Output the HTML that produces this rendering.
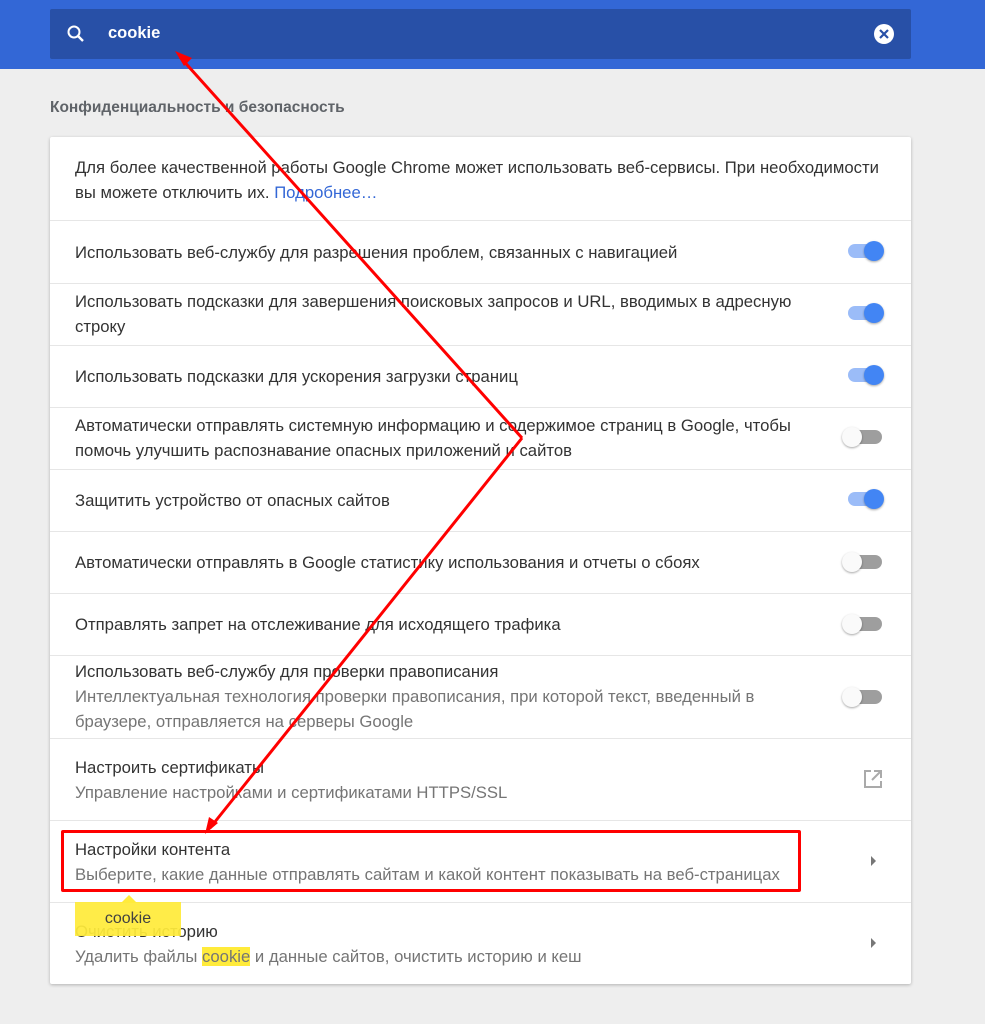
<!DOCTYPE html>
<html><head><meta charset="utf-8"><style>
body{margin:0;width:985px;height:1024px;background:#eeeeee;font-family:"Liberation Sans",Arial,sans-serif;position:relative;overflow:hidden}
.top{position:absolute;left:0;top:0;width:985px;height:69px;background:#3367d6}
.search{position:absolute;left:50px;top:9px;width:861px;height:50px;background:#2850a7;border-radius:2px}
.h{position:absolute;left:50px;top:99px;font-size:15.5px;font-weight:bold;color:#5f6368}
.card{position:absolute;left:50px;top:137px;width:861px;height:847px;background:#fff;box-shadow:0 1px 3px rgba(0,0,0,.25);border-radius:2px}
.t{position:absolute;left:75px;font-size:16.7px;color:#333;line-height:25px;white-space:nowrap}
.s{color:#757575}
.d{position:absolute;left:50px;width:861px;height:1px;background:#e6e6e6}
.tg{position:absolute;left:848px;width:34px;height:14px;border-radius:7px}
.tg i{position:absolute;top:-3px;width:20px;height:20px;border-radius:50%;box-shadow:0 1px 2px rgba(0,0,0,.35)}
.on{background:#9bbcf8}.on i{left:16px;background:#4285f4}
.off{background:#9e9e9e}.off i{left:-6px;background:#fafafa}
</style></head><body>
<div class="top"></div>
<div class="search">
<svg style="position:absolute;left:16px;top:15px" width="20" height="20" viewBox="0 0 20 20"><circle cx="8" cy="8" r="5.5" fill="none" stroke="#fff" stroke-width="2"/><path d="M12 12l5 5" stroke="#fff" stroke-width="2.4"/></svg>
<div style="position:absolute;left:58px;top:15px;color:#fff;font-size:16.5px;font-weight:bold">cookie</div>
<svg style="position:absolute;left:823px;top:14px" width="22" height="22" viewBox="0 0 22 22"><circle cx="11" cy="11" r="10" fill="#fff"/><path d="M7 7l8 8M15 7l-8 8" stroke="#2850a7" stroke-width="2.2"/></svg>
</div>
<div class="h">Конфиденциальность и безопасность</div>
<div class="card"></div>
<div class="t" style="top:155px">Для более качественной работы Google Chrome может использовать веб-сервисы. При необходимости<br>вы можете отключить их. <span style="color:#3367d6">Подробнее…</span></div>
<div class="d" style="top:220px"></div>
<div class="t" style="top:240px">Использовать веб-службу для разрешения проблем, связанных с навигацией</div>
<div class="tg on" style="top:244px"><i></i></div>
<div class="d" style="top:283px"></div>
<div class="t" style="top:289px">Использовать подсказки для завершения поисковых запросов и URL, вводимых в адресную<br>строку</div>
<div class="tg on" style="top:306px"><i></i></div>
<div class="d" style="top:345px"></div>
<div class="t" style="top:364px">Использовать подсказки для ускорения загрузки страниц</div>
<div class="tg on" style="top:368px"><i></i></div>
<div class="d" style="top:407px"></div>
<div class="t" style="top:413px">Автоматически отправлять системную информацию и содержимое страниц в Google, чтобы<br>помочь улучшить распознавание опасных приложений и сайтов</div>
<div class="tg off" style="top:430px"><i></i></div>
<div class="d" style="top:469px"></div>
<div class="t" style="top:488px">Защитить устройство от опасных сайтов</div>
<div class="tg on" style="top:492px"><i></i></div>
<div class="d" style="top:531px"></div>
<div class="t" style="top:550px">Автоматически отправлять в Google статистику использования и отчеты о сбоях</div>
<div class="tg off" style="top:555px"><i></i></div>
<div class="d" style="top:593px"></div>
<div class="t" style="top:612px">Отправлять запрет на отслеживание для исходящего трафика</div>
<div class="tg off" style="top:617px"><i></i></div>
<div class="d" style="top:655px"></div>
<div class="t" style="top:659px">Использовать веб-службу для проверки правописания<br><span class="s">Интеллектуальная технология проверки правописания, при которой текст, введенный в<br>браузере, отправляется на серверы Google</span></div>
<div class="tg off" style="top:690px"><i></i></div>
<div class="d" style="top:738px"></div>
<div class="t" style="top:755px">Настроить сертификаты<br><span class="s">Управление настройками и сертификатами HTTPS/SSL</span></div>
<svg style="position:absolute;left:863px;top:769px" width="20" height="20" viewBox="0 0 20 20"><path d="M8 2H2v16h16v-6" fill="none" stroke="#aaa" stroke-width="2"/><path d="M11 2h7v7M18 2l-9 9" fill="none" stroke="#aaa" stroke-width="2"/></svg>
<div class="d" style="top:820px"></div>
<div class="t" style="top:837px">Настройки контента<br><span class="s">Выберите, какие данные отправлять сайтам и какой контент показывать на веб-страницах</span></div>
<div style="position:absolute;left:871px;top:856px;border-left:5px solid #777;border-top:5px solid transparent;border-bottom:5px solid transparent"></div>
<div class="d" style="top:902px"></div>
<div class="t" style="top:919px">Очистить историю<br><span class="s">Удалить файлы <span style="background:#ffeb3b">cookie</span> и данные сайтов, очистить историю и кеш</span></div>
<div style="position:absolute;left:871px;top:938px;border-left:5px solid #777;border-top:5px solid transparent;border-bottom:5px solid transparent"></div>
<div style="position:absolute;left:75px;top:902px;width:106px;height:34px;background:#ffeb3b;opacity:.93;font-size:16px;color:#333;text-align:center;line-height:34px">cookie</div>
<div style="position:absolute;left:121px;top:895px;border-bottom:8px solid #ffeb3b;border-left:8px solid transparent;border-right:8px solid transparent"></div>
<div style="position:absolute;left:61px;top:830px;width:734px;height:56px;border:3px solid #f00;border-radius:2px"></div>
<svg style="position:absolute;left:0;top:0" width="985" height="1024">
<path d="M522 438L180 57M522 438L210 828" stroke="#f00" stroke-width="3" fill="none"/>
<path d="M175 51l17 7-8 8z" fill="#f00"/>
<path d="M205 834l4-17 9 6z" fill="#f00"/>
</svg>
</body></html>
